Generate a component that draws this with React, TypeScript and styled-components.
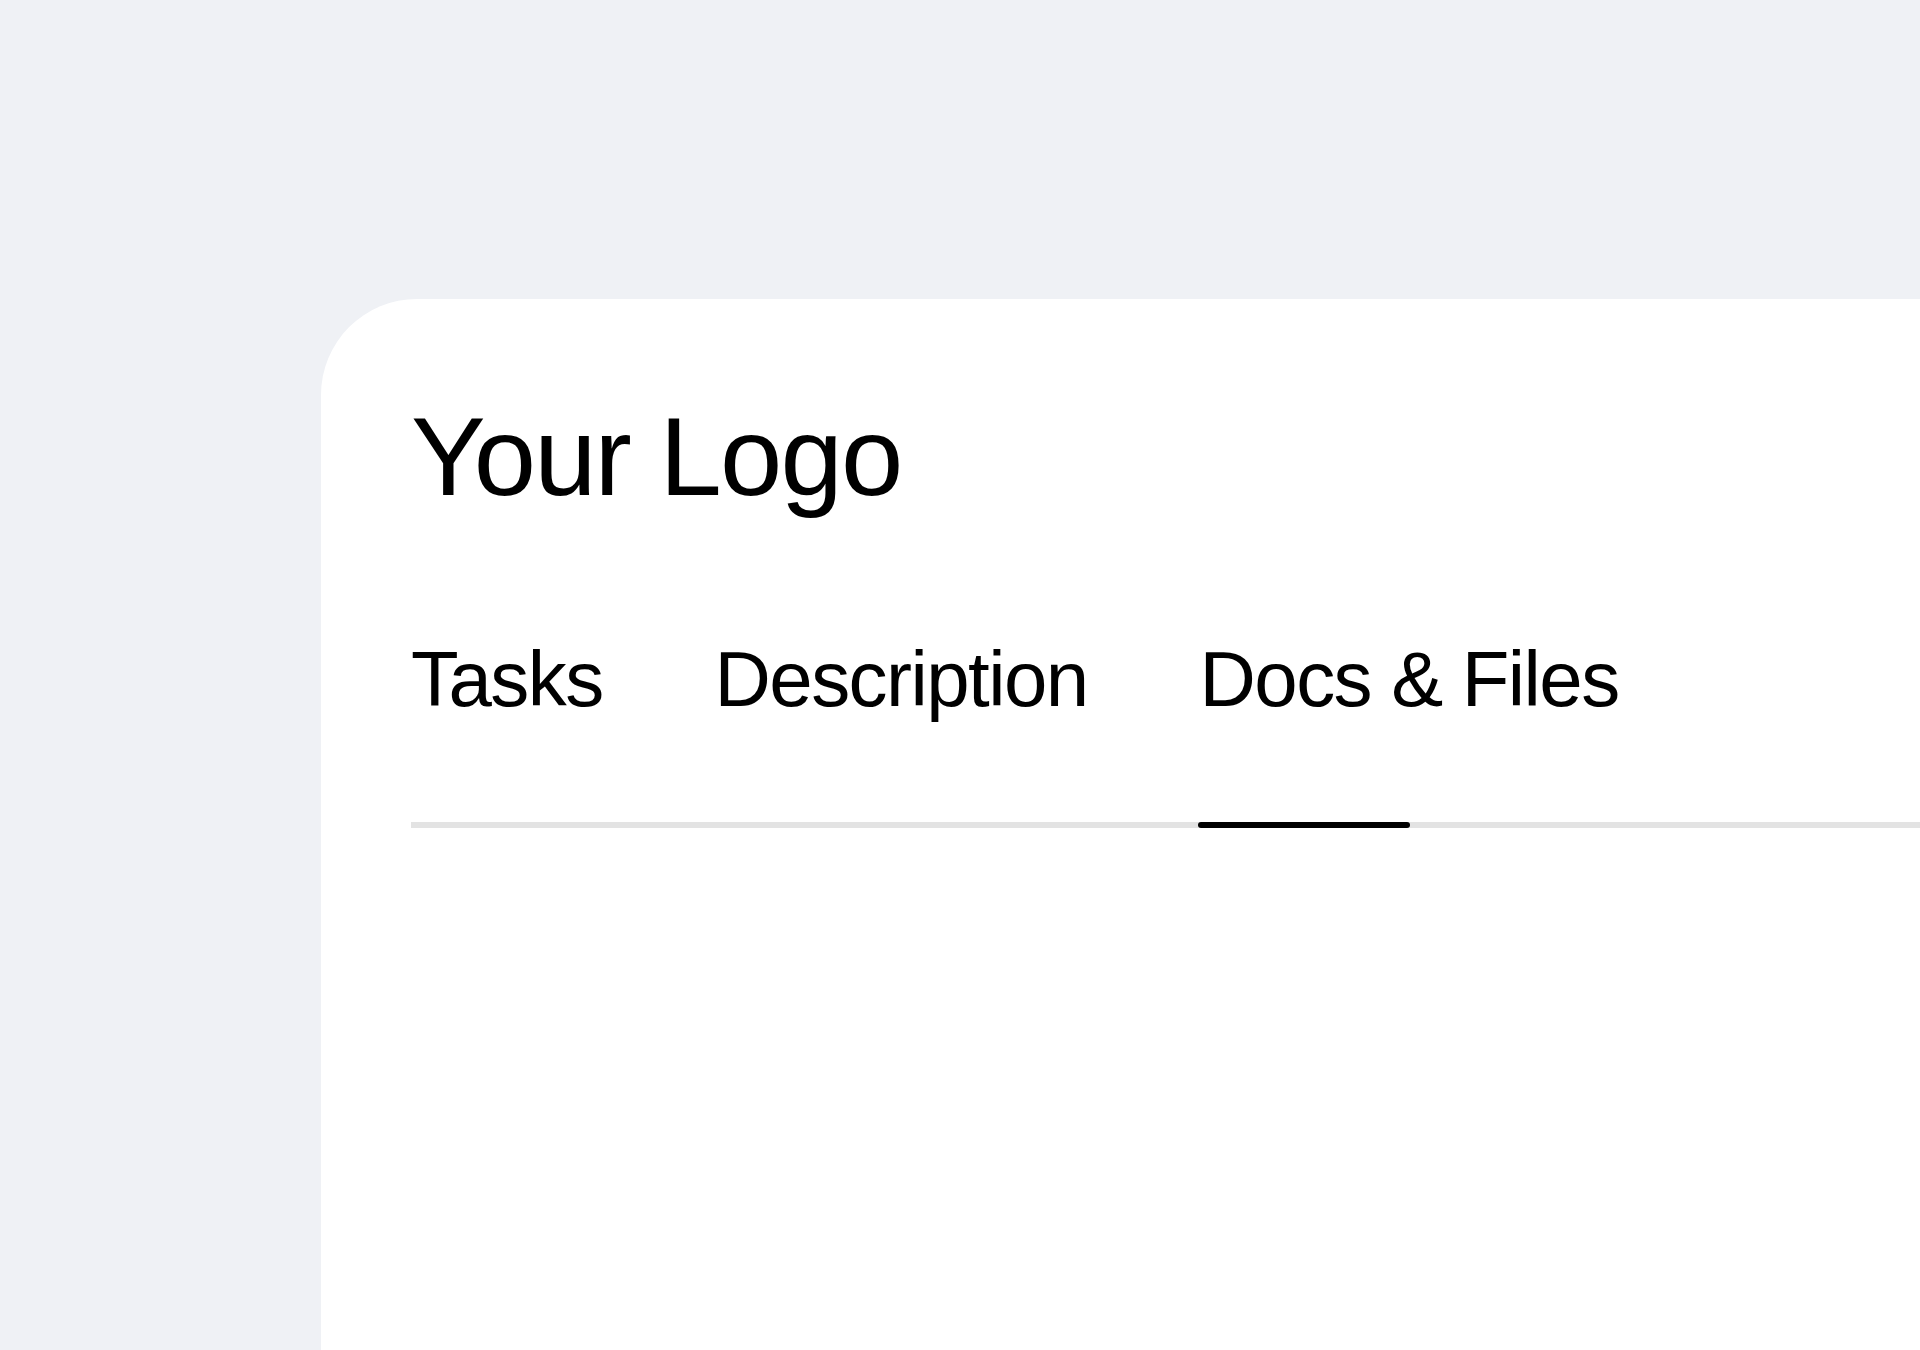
import styled, { createGlobalStyle } from 'styled-components';

// ─── Global ──────────────────────────────────────────────────────────────────

const GlobalStyle = createGlobalStyle`
  html, body { margin: 0; padding: 0; background: #eff1f5; }
  body { font-family: "Liberation Sans", Arial, sans-serif; color: #000; overflow: hidden; }
  #root { min-height: 100vh; }
`;

// ─── Styled Components ───────────────────────────────────────────────────────

const Page = styled.div`
  min-height: 100vh; display: flex; flex-direction: column;
  padding: 299px 0 0 321px; box-sizing: border-box;
`;

const Card = styled.div`
  flex: 1; background: #fff; border-radius: 96px 0 0 0;
  padding: 102px 0 0 90px; min-height: 1051px; box-sizing: border-box;
`;

const Logo = styled.div`
  font-size: 112px; line-height: 1; letter-spacing: -0.016em; font-weight: 400;
`;

const TabList = styled.div`
  display: flex; gap: 112px; margin-top: 127px;
  border-bottom: 6px solid #e3e3e3;
`;

const Tab = styled.button<{ $active?: boolean }>`
  position: relative; background: none; border: none; padding: 0 0 104px; margin: 0;
  font-family: inherit; font-size: 78px; line-height: 1; letter-spacing: -0.02em; color: #000;
  cursor: pointer;

  &::after {
    content: ''; display: ${({ $active }) => ($active ? 'block' : 'none')};
    position: absolute; left: -2px; bottom: -6px; width: 212px; height: 6px;
    border-radius: 3px; background: #000;
  }
`;

// ─── Component ────────────────────────────────────────────────────────────────

const tabs = ['Tasks', 'Description', 'Docs & Files'];

export default function App() {
  const active = 'Docs & Files';
  return (
    <>
      <GlobalStyle />
      <Page>
        <Card>
          <Logo>Your Logo</Logo>
          <TabList>
            {tabs.map((t) => (
              <Tab key={t} $active={t === active}>{t}</Tab>
            ))}
          </TabList>
        </Card>
      </Page>
    </>
  );
}
